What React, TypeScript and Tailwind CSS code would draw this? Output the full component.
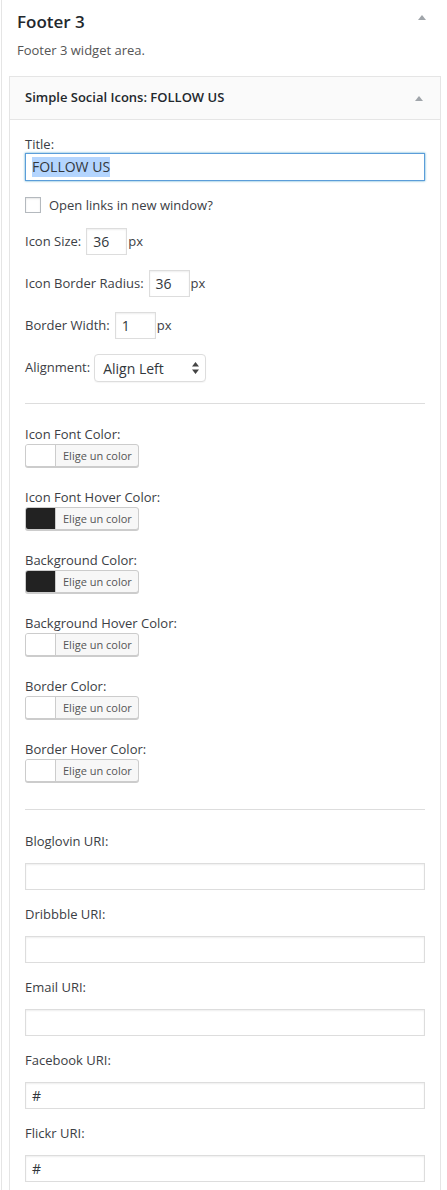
import React from 'react';

const colorFields = [
  { label: 'Icon Font Color:', color: '#ffffff' },
  { label: 'Icon Font Hover Color:', color: '#222222' },
  { label: 'Background Color:', color: '#222222' },
  { label: 'Background Hover Color:', color: '#ffffff' },
  { label: 'Border Color:', color: '#ffffff' },
  { label: 'Border Hover Color:', color: '#ffffff' },
];

const uriFields = [
  { label: 'Bloglovin URI:', value: '' },
  { label: 'Dribbble URI:', value: '' },
  { label: 'Email URI:', value: '' },
  { label: 'Facebook URI:', value: '#' },
  { label: 'Flickr URI:', value: '#' },
];

const numberRows = [
  { label: 'Icon Size:', value: '36' },
  { label: 'Icon Border Radius:', value: '36' },
  { label: 'Border Width:', value: '1' },
];

const UpArrow = () => (
  <svg width="8" height="5" viewBox="0 0 8 5" className="block">
    <path d="M4 0 L8 5 L0 5 Z" fill="#a0a5aa" />
  </svg>
);

const ColorButton: React.FC<{ color: string }> = ({ color }) => (
  <div className="flex h-[23px] w-[114px] overflow-hidden rounded-[3px] border border-[#cccccc] bg-[#f7f7f7] shadow-[0_1px_0_#cccccc]">
    <div className="w-[30px] shrink-0 border-r border-[#cccccc]" style={{ backgroundColor: color }} />
    <span className="whitespace-nowrap pl-[7px] text-[11px] leading-[21px] text-[#555555]">Elige un color</span>
  </div>
);

const App: React.FC = () => {
  return (
    <div className="min-h-[1190px] bg-white pl-px font-['Open_Sans','Liberation_Sans',sans-serif] text-[13px] text-[#3c4045]">
      <div className="min-h-[1190px] border-l border-[#e5e5e5]">
        {/* sidebar header */}
        <div className="flex items-start justify-between pl-[15px] pr-[21px] pt-[10px]">
          <h2 className="text-[17px] font-semibold leading-[24px] text-[#23282d]">Footer 3</h2>
          <div className="pt-[5px]">
            <UpArrow />
          </div>
        </div>
        <p className="mt-[7px] pl-[15px] leading-[18px] text-[#555555]">Footer 3 widget area.</p>

        {/* widget */}
        <div className="ml-[7px] mr-[6px] mt-[17px] border border-[#e5e5e5] bg-white">
          <div className="flex h-[43px] items-center justify-between border-b border-[#e5e5e5] bg-[#fafafa] pl-[15px] pr-[17px]">
            <h3 className="text-[13px] font-semibold text-[#23282d]">Simple Social Icons: FOLLOW US</h3>
            <UpArrow />
          </div>

          <div className="px-[15px] pt-[15px]">
            <label className="block leading-[18px]">Title:</label>
            <div className="flex h-[28px] items-center border border-[#5b9dd9] px-[6px] text-[14px] text-[#32373c] shadow-[0_0_2px_rgba(30,140,190,0.8)]">
              <span className="bg-[#b4d5fe] leading-[20px]">FOLLOW US</span>
            </div>

            <div className="mt-[15px] flex items-center gap-[8px]">
              <div className="h-[16px] w-[16px] border border-[#b4b9be] bg-white shadow-[inset_0_1px_2px_rgba(0,0,0,0.1)]" />
              <span className="leading-[18px]">Open links in new window?</span>
            </div>

            <div className="mt-[14px] flex flex-col gap-[15px]">
              {numberRows.map((r) => (
                <div key={r.label} className="flex items-center">
                  <span className="mr-[5px]">{r.label}</span>
                  <div className="flex h-[27px] w-[41px] items-center border border-[#dddddd] px-[6px] text-[14px] text-[#32373c] shadow-[inset_0_1px_2px_rgba(0,0,0,0.07)]">
                    {r.value}
                  </div>
                  <span className="ml-[1px]">px</span>
                </div>
              ))}
              <div className="flex items-center">
                <span className="mr-[4px]">Alignment:</span>
                <div className="flex h-[28px] w-[112px] items-center justify-between rounded-[4px] border border-[#dddddd] bg-white pl-[8px] pr-[6px] text-[14px] text-[#32373c] shadow-[0_1px_1px_rgba(0,0,0,0.04)]">
                  <span>Align Left</span>
                  <svg width="7" height="12" viewBox="0 0 7 12">
                    <path d="M3.5 0 L7 4.5 L0 4.5 Z M3.5 12 L7 7.5 L0 7.5 Z" fill="#444444" />
                  </svg>
                </div>
              </div>
            </div>

            <div className="mt-[21px] border-t border-[#dddddd]" />

            <div className="mt-[21px] flex flex-col gap-[21px]">
              {colorFields.map((f) => (
                <div key={f.label}>
                  <div className="leading-[18px]">{f.label}</div>
                  <div className="mt-px">
                    <ColorButton color={f.color} />
                  </div>
                </div>
              ))}
            </div>

            <div className="mt-[27px] border-t border-[#dddddd]" />

            <div className="mt-[22px] flex flex-col gap-[15px]">
              {uriFields.map((f) => (
                <div key={f.label}>
                  <div className="leading-[18px]">{f.label}</div>
                  <div className="mt-[13px] flex h-[27px] items-center border border-[#dddddd] px-[6px] text-[14px] text-[#32373c] shadow-[inset_0_1px_2px_rgba(0,0,0,0.07)]">
                    {f.value}
                  </div>
                </div>
              ))}
            </div>
            <div className="h-[40px]" />
          </div>
        </div>
      </div>
    </div>
  );
};

export default App;
